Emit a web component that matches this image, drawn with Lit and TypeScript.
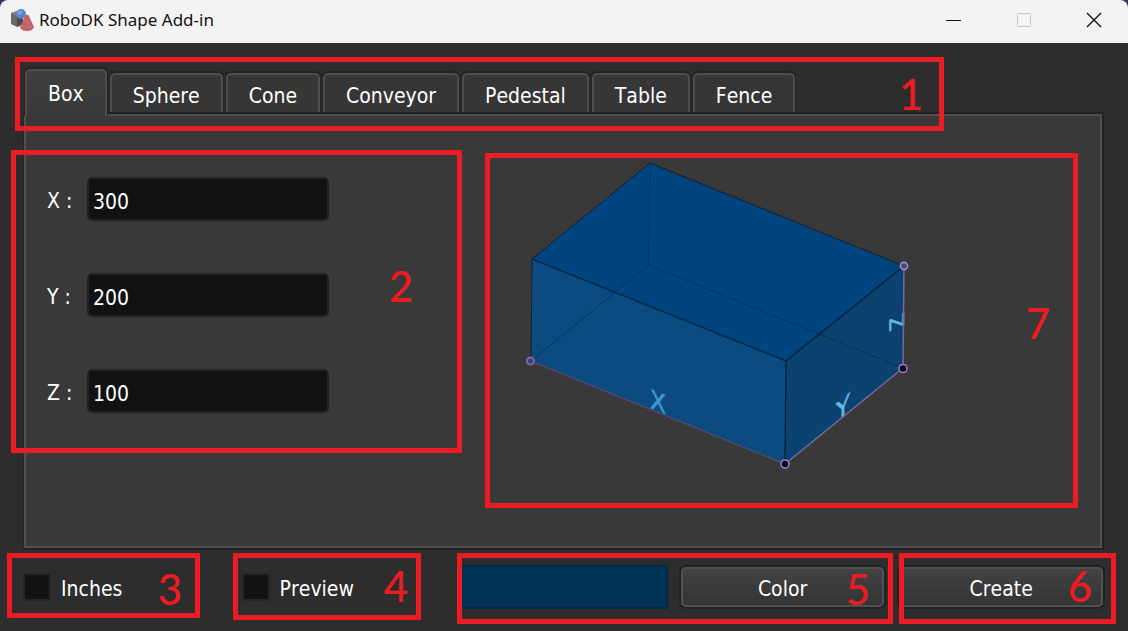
import { LitElement, html, css, svg } from "lit";
import { customElement, property, state } from "lit/decorators.js";
import { classMap } from "lit/directives/class-map.js";

/** Numbered frame laid over the part of the window that it points out. */
@customElement("call-out")
class CallOut extends LitElement {
  @property({ type: Number }) number = 0;

  static styles = css`
    :host {
      position: absolute;
      box-sizing: border-box;
      display: flex;
      align-items: center;
      justify-content: flex-end;
      border: 5px solid #ed1c24;
      color: #ed1c24;
      font: 500 42px/42px Lato, sans-serif;
      pointer-events: none;
      z-index: 3;
    }
  `;

  render() {
    return html`<span>${this.number}</span>`;
  }
}

/** Transparent box with its measured edges marked X, Y and Z. */
@customElement("box-drawing")
class BoxDrawing extends LitElement {
  static styles = css`
    :host {
      display: block;
    }
    svg {
      display: block;
      width: 100%;
      height: 355px;
    }
    .top { fill: #004480; }
    .front { fill: #0b4b7f; }
    .side { fill: #0b426f; }
    .edge { fill: none; stroke: #041f38; stroke-width: 1.3; }
    .hidden { fill: none; stroke: #08325a; stroke-width: 1; stroke-dasharray: 11 1; }
    .outer { fill: none; stroke: #15202b; stroke-width: 1; }
    .measure { fill: none; stroke: #79699f; stroke-width: 1.5; }
    .faint { stroke: #4b4a72; }
    .node { fill: #05030c; stroke: #9a7fcf; stroke-width: 1.6; }
    .open { fill: #4b4860; stroke: #a98bdc; }
    .dim { fill: #3b3f80; stroke: #7d67a8; stroke-width: 2; }
    .axis {
      fill: #62b8e4;
      stroke: #62b8e4;
      stroke-width: 0.5;
      font: 26px "DejaVu Sans Condensed", "DejaVu Sans", sans-serif;
      font-stretch: condensed;
      text-anchor: middle;
    }
    .axis-x { fill: #4496c8; stroke: #4496c8; }
    .axis-z { font: 20px "DejaVu Sans", sans-serif; }
  `;

  render() {
    return html`
      <svg viewBox="0 0 593 355" preserveAspectRatio="xMinYMin meet" role="img" aria-label="Box dimensions">
        ${svg`
          <polygon class="top" points="165,10 419,113 301,208 47,106" />
          <polygon class="front" points="47,106 301,208 300,311 46,208" />
          <polygon class="side" points="301,208 419,113 418,215 300,311" />
          <path class="hidden" d="M165 10L163.500 112L46 208M163.500 112L418 215" />
          <path class="outer" d="M47 106L165 10L419 113M47 106L46 208" />
          <path class="edge" d="M47 106L301 208L419 113M301 208L300 311" />
          <text class="axis axis-x" transform="translate(173 258) skewY(22)">X</text>
          <text class="axis" transform="translate(358 264) skewY(-39)">Y</text>
          <text class="axis axis-z" transform="translate(419 166) skewY(-25) rotate(-90)">Z</text>
          <path class="measure faint" d="M46 208L300 311" />
          <path class="measure" d="M300 311L418 215L419 113" />
          <circle class="node dim" cx="45.500" cy="208" r="3.600" />
          <circle class="node" cx="300" cy="311" r="4" />
          <circle class="node" cx="418" cy="215.500" r="4" />
          <circle class="node open" cx="419" cy="113" r="3.600" />
        `}
      </svg>
    `;
  }
}

const TABS = ["Box", "Sphere", "Cone", "Conveyor", "Pedestal", "Table", "Fence"];
const FIELDS = [
  { id: "x", label: "X :", value: "300" },
  { id: "y", label: "Y :", value: "200" },
  { id: "z", label: "Z :", value: "100" },
];

@customElement("app-root")
class AppRoot extends LitElement {
  @state() private active = "Box";

  static styles = css`
    :host {
      display: flex;
      flex-direction: column;
      min-height: 100vh;
      background: #33305c;
      color: #fff;
      font: 21px/28px "DejaVu Sans Condensed", "DejaVu Sans", sans-serif;
      font-stretch: condensed;
      font-kerning: none;
    }
    * { box-sizing: border-box; }
    button, input { font: inherit; font-kerning: none; color: inherit; }

    .titlebar {
      display: flex;
      align-items: center;
      height: 43px;
      padding: 0 0 3px 10px;
      background: #f3f3f3;
      border-radius: 8px 8px 0 0;
      color: #111;
    }
    .logo { width: 24px; height: 24px; margin-right: 5px; }
    .title { flex: 1; margin: 0; font: 17px/24px "Noto Sans", sans-serif; }
    .winbtn {
      display: grid;
      place-items: center;
      width: 70px;
      height: 40px;
      padding: 0 0 0 2px;
      border: 0;
      background: none;
    }
    .winbtn svg { width: 16px; height: 16px; fill: none; stroke: #111; }

    .client {
      flex: 1;
      display: flex;
      flex-direction: column;
      padding: 26px 26px 0 24px;
      background: #2d2d2d;
    }
    .tabs {
      position: relative;
      display: flex;
      align-items: flex-end;
      gap: 3px;
      height: 47px;
      margin-bottom: -2px;
      padding-left: 1px;
    }
    .tab {
      height: 39px;
      margin-bottom: 4px;
      padding: 4px 21px 0;
      border: 2px solid #4e4e4e;
      border-bottom: 0;
      border-radius: 5px 5px 0 0;
      background: #363636;
      box-shadow: 0 -1px 0 1px #232323;
    }
    .tab.on {
      position: relative;
      z-index: 1;
      height: 47px;
      margin-bottom: 0;
      padding-bottom: 4px;
      background: linear-gradient(#3e3e3e, #393939);
      clip-path: inset(-2px -2px 0 -2px);
    }
    .panel {
      position: relative;
      flex: 1;
      display: flex;
      align-items: flex-start;
      padding: 0 22px 0 20px;
      border: 2px solid #4f4f4f;
      background: #393939;
      box-shadow: 0 0 0 1px #222, 1px 1px 0 1px #222, 0 -1px 0 1px #222;
    }
    .fields {
      flex: 0 0 439px;
      display: grid;
      gap: 52px;
      padding-top: 61px;
    }
    .field { display: flex; align-items: center; }
    .field label { width: 41px; padding: 4px 0 0 1px; }
    .field input {
      width: 242px;
      height: 44px;
      padding: 5px 4px 0;
      border: 2px solid #222;
      border-radius: 5px;
      background: #121212;
      outline: none;
    }
    .figure { position: relative; flex: 1; min-width: 0; margin-top: 37px; }

    .footer {
      position: relative;
      display: grid;
      grid-template-columns: repeat(5, minmax(0, 1fr));
      align-items: center;
      gap: 11px;
      height: 83px;
      margin: 0 -3px 0 -1px;
      padding-bottom: 5px;
    }
    .check { display: flex; align-items: center; gap: 10px; }
    .check span { padding-top: 3px; }
    .check input {
      appearance: none;
      width: 28px;
      height: 28px;
      margin: 0;
      border: 2px solid #252525;
      border-radius: 2px;
      background: #121212;
    }
    .check input:checked { background: #0b4b7f; }
    .swatch {
      height: 44px;
      border: 2px solid #02294a;
      background: #003355;
    }
    .push {
      height: 40px;
      margin: 0 2px;
      padding: 3px 0 0;
      border: 2px solid #505050;
      border-radius: 5px;
      background: linear-gradient(#424242, #343434);
      box-shadow: 0 0 0 2px #222;
    }

    .c1 { left: -9px; top: -12px; width: 929px; height: 74px; padding-right: 16px; }
    .c2 { left: -15px; top: 34px; width: 451px; height: 303px; padding: 0 44px 32px 0; }
    .c3 { left: -16px; top: 5px; width: 193px; height: 65px; padding: 6px 13px 0 0; }
    .c4 { left: 210px; top: 5px; width: 188px; height: 67px; padding: 0 8px 2px 0; }
    .c5 { right: 212px; top: 5px; width: 436px; height: 71px; padding-right: 18px; }
    .c6 { right: -11px; top: 5px; width: 217px; height: 71px; padding: 0 19px 6px 0; }
    .c7 { inset: 0; padding: 0 23px 16px 0; }
  `;

  render() {
    return html`
      <header class="titlebar">
        <svg class="logo" viewBox="0 0 24 24" aria-hidden="true">
          <path fill="#6a6a66" d="M1 5L7 3L13 5V16L7 19L1 16Z" />
          <path fill="#4b4b49" d="M7 8L13 5V16L7 19Z" />
          <path fill="#85857f" d="M1 5L7 3L13 5L7 8Z" />
          <circle cx="11" cy="6" r="5" fill="#5b83c9" />
          <circle cx="10" cy="4.500" r="2.500" fill="#7d9fdb" />
          <path fill="#c4626c" d="M15 8Q17 5 19 8L24 19Q23 23 17 23Q11 23 10 19Z" />
          <path fill="none" stroke="#d27f87" stroke-width=".5" d="M13 13Q17 15 21 13M11 18Q17 21 23 18" />
        </svg>
        <h1 class="title">RoboDK Shape Add-in</h1>
        <button class="winbtn" aria-label="Minimize">
          <svg viewBox="0 0 16 16"><path d="M0 8.500H15" /></svg>
        </button>
        <button class="winbtn" aria-label="Maximize" disabled>
          <svg viewBox="0 0 16 16"><rect x="1.500" y="1.500" width="13" height="13" rx="1" stroke="#c4c4c4" /></svg>
        </button>
        <button class="winbtn" aria-label="Close">
          <svg viewBox="0 0 16 16"><path stroke-width="1.400" d="M1 1L15 15M15 1L1 15" /></svg>
        </button>
      </header>

      <main class="client">
        <div class="tabs" role="tablist">
          ${TABS.map(
            (name) => html`<button
              class=${classMap({ tab: true, on: name === this.active })}
              role="tab"
              aria-selected=${name === this.active}
              @click=${() => (this.active = name)}
            >${name}</button>`
          )}
          <call-out class="c1" .number=${1}></call-out>
        </div>

        <section class="panel" role="tabpanel">
          <div class="fields">
            ${FIELDS.map(
              (f) => html`<div class="field">
                <label for=${f.id}>${f.label}</label>
                <input id=${f.id} type="text" .value=${f.value} />
              </div>`
            )}
          </div>
          <call-out class="c2" .number=${2}></call-out>
          <div class="figure">
            <box-drawing></box-drawing>
            <call-out class="c7" .number=${7}></call-out>
          </div>
        </section>

        <footer class="footer">
          <label class="check"><input type="checkbox" /><span>Inches</span></label>
          <label class="check"><input type="checkbox" /><span>Preview</span></label>
          <div class="swatch"></div>
          <button class="push">Color</button>
          <button class="push">Create</button>
          <call-out class="c3" .number=${3}></call-out>
          <call-out class="c4" .number=${4}></call-out>
          <call-out class="c5" .number=${5}></call-out>
          <call-out class="c6" .number=${6}></call-out>
        </footer>
      </main>
    `;
  }
}
